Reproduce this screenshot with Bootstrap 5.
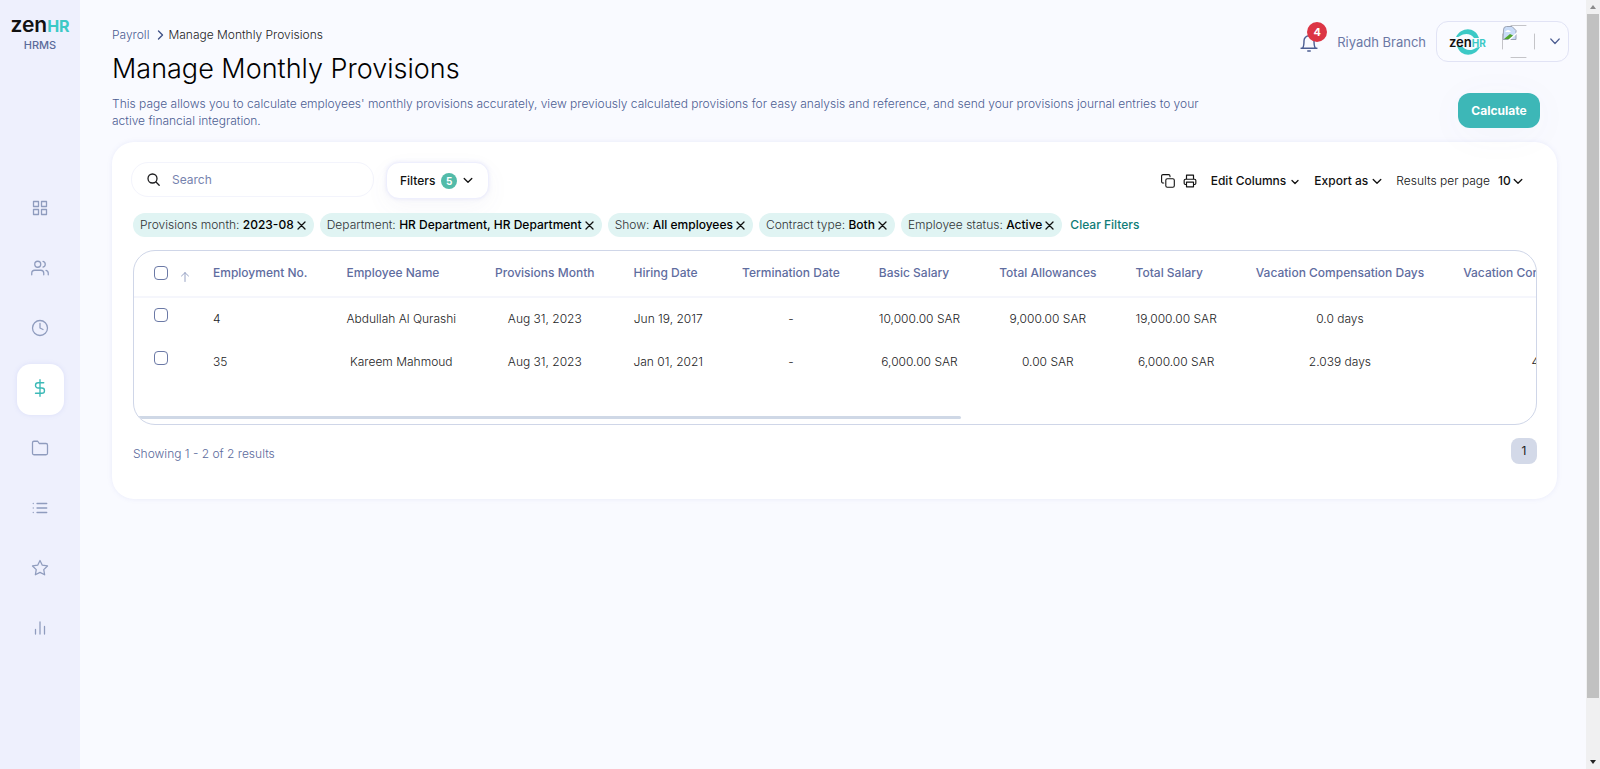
<!DOCTYPE html>
<html lang="en">
<head>
<meta charset="utf-8">
<meta name="viewport" content="width=device-width, initial-scale=1">
<title>Manage Monthly Provisions</title>
<link href="https://cdn.jsdelivr.net/npm/bootstrap@5.3.0/dist/css/bootstrap.min.css" rel="stylesheet">
<style>
  body { font-family: Inter, "Liberation Sans", sans-serif; font-size: 12px; line-height: 18px; font-weight: 300; color: #1c1c1e; background: #f9faff; }
  a { text-decoration: none; }
  svg { display: block; fill: none; stroke: currentColor; stroke-linecap: round; stroke-linejoin: round; flex: none; }
  .ink-blue { color: #4c5d92; }
  .side { width: 80px; background: #eef0fd; flex: none; }
  .brand { padding-top: 15px; margin-bottom: 132px; color: #111; line-height: 20px; }
  .brand-zen { font-size: 21px; font-weight: 600; }
  .brand-hr { font-size: 16px; font-weight: 700; color: #3cc9c6; }
  .brand-sub { font-size: 11px; line-height: 14px; color: #5b6b9b; font-weight: 500; }
  .side-link { width: 47px; height: 51px; margin: 9px auto; padding-bottom: 4px; color: #8f9cbe; border-radius: 14px; }
  .side-link.current { background: #fff; color: #3cb9b7; box-shadow: 0 0 5px rgba(120,130,220,.15); }
  .page-main { padding: 21px 17px 40px 32px; min-width: 0; }
  .page-body { margin-right: 12px; }
  .page-title { font-size: 27px; line-height: 36px; font-weight: 300; color: #000; margin: 7px 0 8px; }
  .crumbs { padding-top: 5px; }
  .crumb-arrow { color: #3f5186; }
  .intro { line-height: 17px; width: 76%; }
  .count-dot { left: 8px; top: -10px; width: 20px; height: 20px; line-height: 20px; font-size: 11px; font-weight: 700; background: #dc3545; color: #fff; border-radius: 50%; text-align: center; }
  .bell-btn, .flat-btn { border: 0; background: none; padding: 0; line-height: 18px; font-weight: 500; }
  .bell-btn { margin-right: 18px; }
  .flat-btn { color: inherit; }
  .branch { font-size: 13px; font-weight: 400; margin-right: 10px; color: #6b78a5; }
  .account { width: 133px; height: 41px; border: 1px solid #e1e3f5; border-radius: 12px; background: #fafbff; padding: 0 8px 0 12px; }
  .mini-brand { width: 38px; height: 30px; color: #111; line-height: 14px; }
  .mini-brand .brand-zen { font-size: 13px; }
  .mini-brand .brand-hr { font-size: 10px; }
  .mini-arcs { left: 6px; top: 2px; }
  .mini-word { left: 0; top: 8px; }
  .broken-pic { color: #c4c4c8; }
  .btn-calc { width: 82px; height: 35px; background: #3db7b7; color: #fff; font-size: 12px; font-weight: 700; border-radius: 12px; margin: -2px 17px 0 0; padding: 0; box-shadow: 0 6px 40px rgba(90,90,160,.04); }
  .btn-calc:hover { background: #34a5a5; color: #fff; }
  .panel { background: #fff; border-radius: 22px; padding: 20px 20px 35px 21px; margin-top: 13px; box-shadow: 0 0 5px rgba(120,130,220,.13); }
  .search-wrap { width: 243px; height: 35px; border: 1px solid #f3f4fc; border-radius: 17px; padding: 0 15px; margin-left: -2px; }
  .search-wrap input { border: 0; outline: 0; background: none; width: 100%; font-weight: 400; color: #333; padding: 0; }
  .search-wrap input::placeholder { color: #7683ae; opacity: 1; }
  .btn-filters { width: 103px; height: 37px; border: 1px solid #eeeffd; border-radius: 13px; background: #fff; font-weight: 500; color: #111; padding: 0 15px 0 13px; box-shadow: 0 0 4px rgba(120,130,220,.15), 0 8px 24px rgba(90,90,160,.05); }
  .filter-count { width: 16px; height: 16px; line-height: 16px; border-radius: 50%; background: #52bba9; color: #fff; font-size: 10px; font-weight: 700; }
  .tools { color: #111; font-weight: 500; padding: 10px 14px 0 0; }
  .tools select { appearance: none; border: 0; background: none; padding: 0; font-weight: 500; color: #111; }
  .tool-gap { margin-right: 14px; }
  .chips { gap: 6px; margin: 14px 0 13px; }
  .chip { height: 24px; border-radius: 12px; background: #e0f4f3; padding: 0 8px 0 7px; color: #2f3336; white-space: nowrap; }
  .chip b { font-weight: 500; color: #000; }
  .chip button { border: 0; background: none; padding: 0 0 0 3px; color: #111; }
  .clear-link { color: #107c77; font-weight: 500; margin-left: 2px; }
  .grid-box { border: 1px solid #cfd6e8; border-radius: 22px; height: 175px; overflow: hidden; }
  .grid-scroll { overflow: hidden; }
  .grid-table { border-collapse: collapse; width: 100%; white-space: nowrap; }
  .grid-table th, .grid-table td { padding: 0 20px 0 19px; }
  .grid-table th { height: 46px; font-weight: 500; color: #5f6d9f; text-align: left; border-bottom: 2px solid #f5f6fc; padding-bottom: 2px; }
  .grid-table td { height: 43px; text-align: center; }
  .grid-table td.num { text-align: left; }
  .grid-table .pick { text-align: left; width: 60px; padding-left: 20px; padding-right: 0; }
  .grid-table td.pick { padding-bottom: 8px; }
  .pick input { appearance: none; display: block; width: 14px; height: 14px; border: 1px solid #6b79a6; border-radius: 4px; margin: 0; background: #fff; }
  .sort-arrow { color: #98a3c4; }
  .bar-thumb { height: 3px; background: #cfd8e6; border-radius: 0 2px 2px 0; width: 59%; margin-bottom: 5px; }
  .results { margin-top: 13px; }
  .showing { color: #5b6a9c; padding-top: 7px; }
  .page-no { width: 26px; height: 26px; line-height: 26px; border-radius: 8px; background: #d3d9e8; color: #222; text-align: center; font-weight: 400; }
  .track { width: 14px; background: #f0f0f1; flex: none; }
  .track-thumb { width: 12px; height: 89%; background: #c1c1c1; }
  .tri-slot { height: 14px; }
  .tri-slot svg { fill: #8a8a8a; stroke: none; }
  .tri-slot.down svg { fill: #222; }
</style>
</head>
<body>
<div class="d-flex min-vh-100">
  <aside class="side text-center">
    <div class="brand"><div><span class="brand-zen">zen</span><span class="brand-hr">HR</span></div><div class="brand-sub">HRMS</div></div>
    <nav aria-label="Main">
      <a href="#" class="side-link d-flex align-items-center justify-content-center" aria-label="Dashboard"><svg width="16" height="16" viewBox="0 0 16 16" stroke-width="1.3"><path d="M1.500 1.500h5v5h-5zM9.500 1.500h5v5h-5zM1.500 9.500h5v5h-5zM9.500 9.500h5v5h-5z"/></svg></a>
      <a href="#" class="side-link d-flex align-items-center justify-content-center" aria-label="Employees"><svg width="18" height="18" viewBox="0 0 24 24" stroke-width="1.7"><path d="M17 21v-2a4 4 0 0 0-4-4H5a4 4 0 0 0-4 4v2M23 21v-2a4 4 0 0 0-3-3.870M16 3.130a4 4 0 0 1 0 7.750"/><circle cx="9" cy="7" r="4"/></svg></a>
      <a href="#" class="side-link d-flex align-items-center justify-content-center" aria-label="Time"><svg width="18" height="18" viewBox="0 0 24 24" stroke-width="1.7"><circle cx="12" cy="12" r="10"/><path d="M12 6v6l4 2"/></svg></a>
      <a href="#" class="side-link current d-flex align-items-center justify-content-center" aria-label="Payroll"><svg width="18" height="18" viewBox="0 0 24 24" stroke-width="1.8"><path d="M12 1v22M17 5H9.500a3.500 3.500 0 0 0 0 7h5a3.500 3.500 0 0 1 0 7H6"/></svg></a>
      <a href="#" class="side-link d-flex align-items-center justify-content-center" aria-label="Files"><svg width="18" height="18" viewBox="0 0 24 24" stroke-width="1.7"><path d="M22 19a2 2 0 0 1-2 2H4a2 2 0 0 1-2-2V5a2 2 0 0 1 2-2h5l2 3h9a2 2 0 0 1 2 2z"/></svg></a>
      <a href="#" class="side-link d-flex align-items-center justify-content-center" aria-label="Lists"><svg width="18" height="18" viewBox="0 0 24 24" stroke-width="1.7"><path d="M8 6h13M8 12h13M8 18h13M3 6h.01M3 12h.01M3 18h.01"/></svg></a>
      <a href="#" class="side-link d-flex align-items-center justify-content-center" aria-label="Performance"><svg width="18" height="18" viewBox="0 0 24 24" stroke-width="1.7"><path d="M12 2l3.090 6.260L22 9.270l-5 4.870 1.180 6.880L12 17.770l-6.180 3.250L7 14.140 2 9.270l6.910-1.010z"/></svg></a>
      <a href="#" class="side-link d-flex align-items-center justify-content-center" aria-label="Reports"><svg width="18" height="18" viewBox="0 0 24 24" stroke-width="1.7"><path d="M18 20V10M12 20V4M6 20v-6"/></svg></a>
    </nav>
  </aside>

  <main class="page-main flex-grow-1">
    <header class="d-flex justify-content-between align-items-start">
      <div>
        <nav class="crumbs d-flex align-items-center" aria-label="Breadcrumb">
          <a href="#" class="ink-blue me-2">Payroll</a>
          <svg class="crumb-arrow" width="7" height="10" viewBox="0 0 7 10" stroke-width="1.400"><path d="M1.500 1l4 4-4 4"/></svg>
          <span class="ps-1">Manage Monthly Provisions</span>
        </nav>
        <h1 class="page-title">Manage Monthly Provisions</h1>
      </div>
      <div class="d-flex align-items-center">
        <button class="bell-btn position-relative ink-blue" aria-label="Notifications">
          <svg width="20" height="20" viewBox="0 0 24 24" stroke-width="1.700"><path d="M2.500 19.500h19M4.500 19c1.500-2 1.500-4 1.500-8.500a6 6 0 0 1 12 0c0 4.500 0 6.500 1.500 8.500M10.500 22.800h3"/></svg>
          <span class="count-dot position-absolute">4</span>
        </button>
        <span class="branch">Riyadh Branch</span>
        <button class="account d-flex align-items-center justify-content-between" aria-label="Account">
          <span class="mini-brand position-relative">
            <svg class="mini-arcs position-absolute" width="26" height="26" viewBox="0 0 26 26"><path fill="#3cc9c6" stroke="none" d="M1 8C6-2 20-3 24 9H19C16 4 9 4 5 7 4 8 2 8 1 8zM25 18C20 28 6 29 2 17H7C10 22 17 22 21 19 22 18 24 18 25 18z"/></svg>
            <span class="mini-word position-absolute text-nowrap"><span class="brand-zen">zen</span><span class="brand-hr">HR</span></span>
          </span>
          <svg class="broken-pic" width="33" height="33" viewBox="0 0 33 33" stroke-width="1"><path d="M9 .5h15M9 32.500h15M.5 9v15M32.500 9v15"/><path fill="#c9dcf8" stroke="#9aa2b2" d="M1.500 4.500Q1.500 1.500 4.500 1.500H10l4 4V14.500H1.500z"/><path fill="#fff" stroke="none" d="M3 7q3-4 6 0z"/><path fill="#4fa52f" stroke="none" d="M2 14l6-5 4 2-4 3z"/><path stroke="#fff" stroke-width="1.500" d="M15 8l-8 7"/></svg>
          <svg class="ink-blue" width="10" height="7" viewBox="0 0 10 7" stroke-width="1.200"><path d="M.8 1l4.200 4.500L9.200 1"/></svg>
        </button>
      </div>
    </header>

    <div class="page-body">
      <div class="d-flex justify-content-between align-items-start">
        <p class="intro ink-blue mb-0">This page allows you to calculate employees' monthly provisions accurately, view previously calculated provisions for easy analysis and reference, and send your provisions journal entries to your active financial integration.</p>
        <button class="btn btn-calc">Calculate</button>
      </div>

      <section class="panel">
        <div class="d-flex align-items-start justify-content-between">
          <div class="d-flex align-items-start">
            <label class="search-wrap d-flex align-items-center me-2">
              <svg class="me-2" width="13" height="13" viewBox="0 0 13 13" stroke-width="1.300"><circle cx="5.500" cy="5.500" r="4.500"/><path d="M9 9l3.200 3.200"/></svg>
              <input type="search" class="ms-1" placeholder="Search" aria-label="Search">
            </label>
            <button class="btn-filters d-flex align-items-center justify-content-between ms-1">Filters <span class="filter-count">5</span>
              <svg width="10" height="7" viewBox="0 0 10 7" stroke-width="1.300"><path d="M1.200 1.500L5 5.300l3.800-3.800"/></svg></button>
          </div>
          <div class="tools d-flex align-items-center">
            <button class="flat-btn me-2" aria-label="Copy"><svg width="14" height="14" viewBox="0 0 14 14" stroke-width="1.100"><rect x="4.800" y="4.800" width="8.500" height="8.500" rx="1.500"/><path d="M2.700 9H2A1.400 1.400 0 0 1 .6 7.600V2A1.400 1.400 0 0 1 2 .6h5.600A1.400 1.400 0 0 1 9 2v.7"/></svg></button>
            <button class="flat-btn tool-gap" aria-label="Print"><svg width="14" height="14" viewBox="0 0 24 24" stroke-width="2"><path d="M6 9V2h12v7M6 18H4a2 2 0 0 1-2-2v-5a2 2 0 0 1 2-2h16a2 2 0 0 1 2 2v5a2 2 0 0 1-2 2h-2M6 14h12v8H6z"/></svg></button>
            <button class="flat-btn d-flex align-items-center gap-1 tool-gap">Edit Columns <svg width="10" height="7" viewBox="0 0 10 7" stroke-width="1.300"><path d="M2 2.500l3 3 3-3"/></svg></button>
            <button class="flat-btn d-flex align-items-center gap-1 tool-gap">Export as <svg width="10" height="7" viewBox="0 0 10 7" stroke-width="1.300"><path d="M1.200 1.500L5 5.300l3.800-3.800"/></svg></button>
            <label for="perPage" class="fw-light me-2">Results per page</label>
            <select id="perPage"><option>10</option><option>25</option></select>
            <svg width="10" height="7" viewBox="0 0 10 7" stroke-width="1.300"><path d="M1.200 1.500L5 5.300l3.800-3.800"/></svg>
          </div>
        </div>

        <div class="chips d-flex align-items-center">
          <span class="chip d-flex align-items-center">Provisions month:&nbsp;<b>2023-08</b><button aria-label="Remove"><svg width="9" height="9" viewBox="0 0 9 9" stroke-width="1.300"><path d="M1 1l7 7M8 1L1 8"/></svg></button></span>
          <span class="chip d-flex align-items-center">Department:&nbsp;<b>HR Department, HR Department</b><button aria-label="Remove"><svg width="9" height="9" viewBox="0 0 9 9" stroke-width="1.300"><path d="M1 1l7 7M8 1L1 8"/></svg></button></span>
          <span class="chip d-flex align-items-center">Show:&nbsp;<b>All employees</b><button aria-label="Remove"><svg width="9" height="9" viewBox="0 0 9 9" stroke-width="1.300"><path d="M1 1l7 7M8 1L1 8"/></svg></button></span>
          <span class="chip d-flex align-items-center">Contract type:&nbsp;<b>Both</b><button aria-label="Remove"><svg width="9" height="9" viewBox="0 0 9 9" stroke-width="1.300"><path d="M1 1l7 7M8 1L1 8"/></svg></button></span>
          <span class="chip d-flex align-items-center">Employee status:&nbsp;<b>Active</b><button aria-label="Remove"><svg width="9" height="9" viewBox="0 0 9 9" stroke-width="1.300"><path d="M1 1l7 7M8 1L1 8"/></svg></button></span>
          <a href="#" class="clear-link">Clear Filters</a>
        </div>

        <div class="grid-box d-flex flex-column justify-content-between">
          <div class="grid-scroll">
            <table class="grid-table">
              <thead><tr>
                <th class="pick"><div class="d-flex align-items-center"><input type="checkbox" aria-label="Select all"><svg class="sort-arrow ms-2 mt-2" width="18" height="10" viewBox="0 0 18 10" stroke-width="1"><path d="M9 9.500v-9M5.500 4L9 .7 12.500 4"/></svg></div></th>
                <th>Employment No.</th><th>Employee Name</th><th>Provisions Month</th><th>Hiring Date</th><th>Termination Date</th><th>Basic Salary</th><th>Total Allowances</th><th>Total Salary</th><th>Vacation Compensation Days</th><th>Vacation Compensation Amount</th>
              </tr></thead>
              <tbody>
                <tr><td class="pick"><input type="checkbox" aria-label="Select employee 4"></td><td class="num">4</td><td>Abdullah Al Qurashi</td><td>Aug 31, 2023</td><td>Jun 19, 2017</td><td>-</td><td>10,000.00 SAR</td><td>9,000.00 SAR</td><td>19,000.00 SAR</td><td>0.0 days</td><td></td></tr>
                <tr><td class="pick"><input type="checkbox" aria-label="Select employee 35"></td><td class="num">35</td><td>Kareem Mahmoud</td><td>Aug 31, 2023</td><td>Jan 01, 2021</td><td>-</td><td>6,000.00 SAR</td><td>0.00 SAR</td><td>6,000.00 SAR</td><td>2.039 days</td><td>407 SAR</td></tr>
              </tbody>
            </table>
          </div>
          <div class="bar-thumb"></div>
        </div>

        <div class="results d-flex justify-content-between align-items-start">
          <span class="showing">Showing 1 - 2 of 2 results</span>
          <a href="#" class="page-no">1</a>
        </div>
      </section>
    </div>
  </main>

  <div class="track d-flex flex-column align-items-center vh-100 sticky-top" aria-hidden="true">
    <div class="tri-slot d-flex align-items-center"><svg width="6" height="4" viewBox="0 0 6 4"><path d="M0 4l3-4 3 4z"/></svg></div>
    <div class="track-thumb"></div>
    <div class="tri-slot down d-flex align-items-center mt-auto"><svg width="6" height="4" viewBox="0 0 6 4"><path d="M0 0l3 4 3-4z"/></svg></div>
  </div>
</div>
<script src="https://cdn.jsdelivr.net/npm/bootstrap@5.3.0/dist/js/bootstrap.bundle.min.js"></script>
</body>
</html>
